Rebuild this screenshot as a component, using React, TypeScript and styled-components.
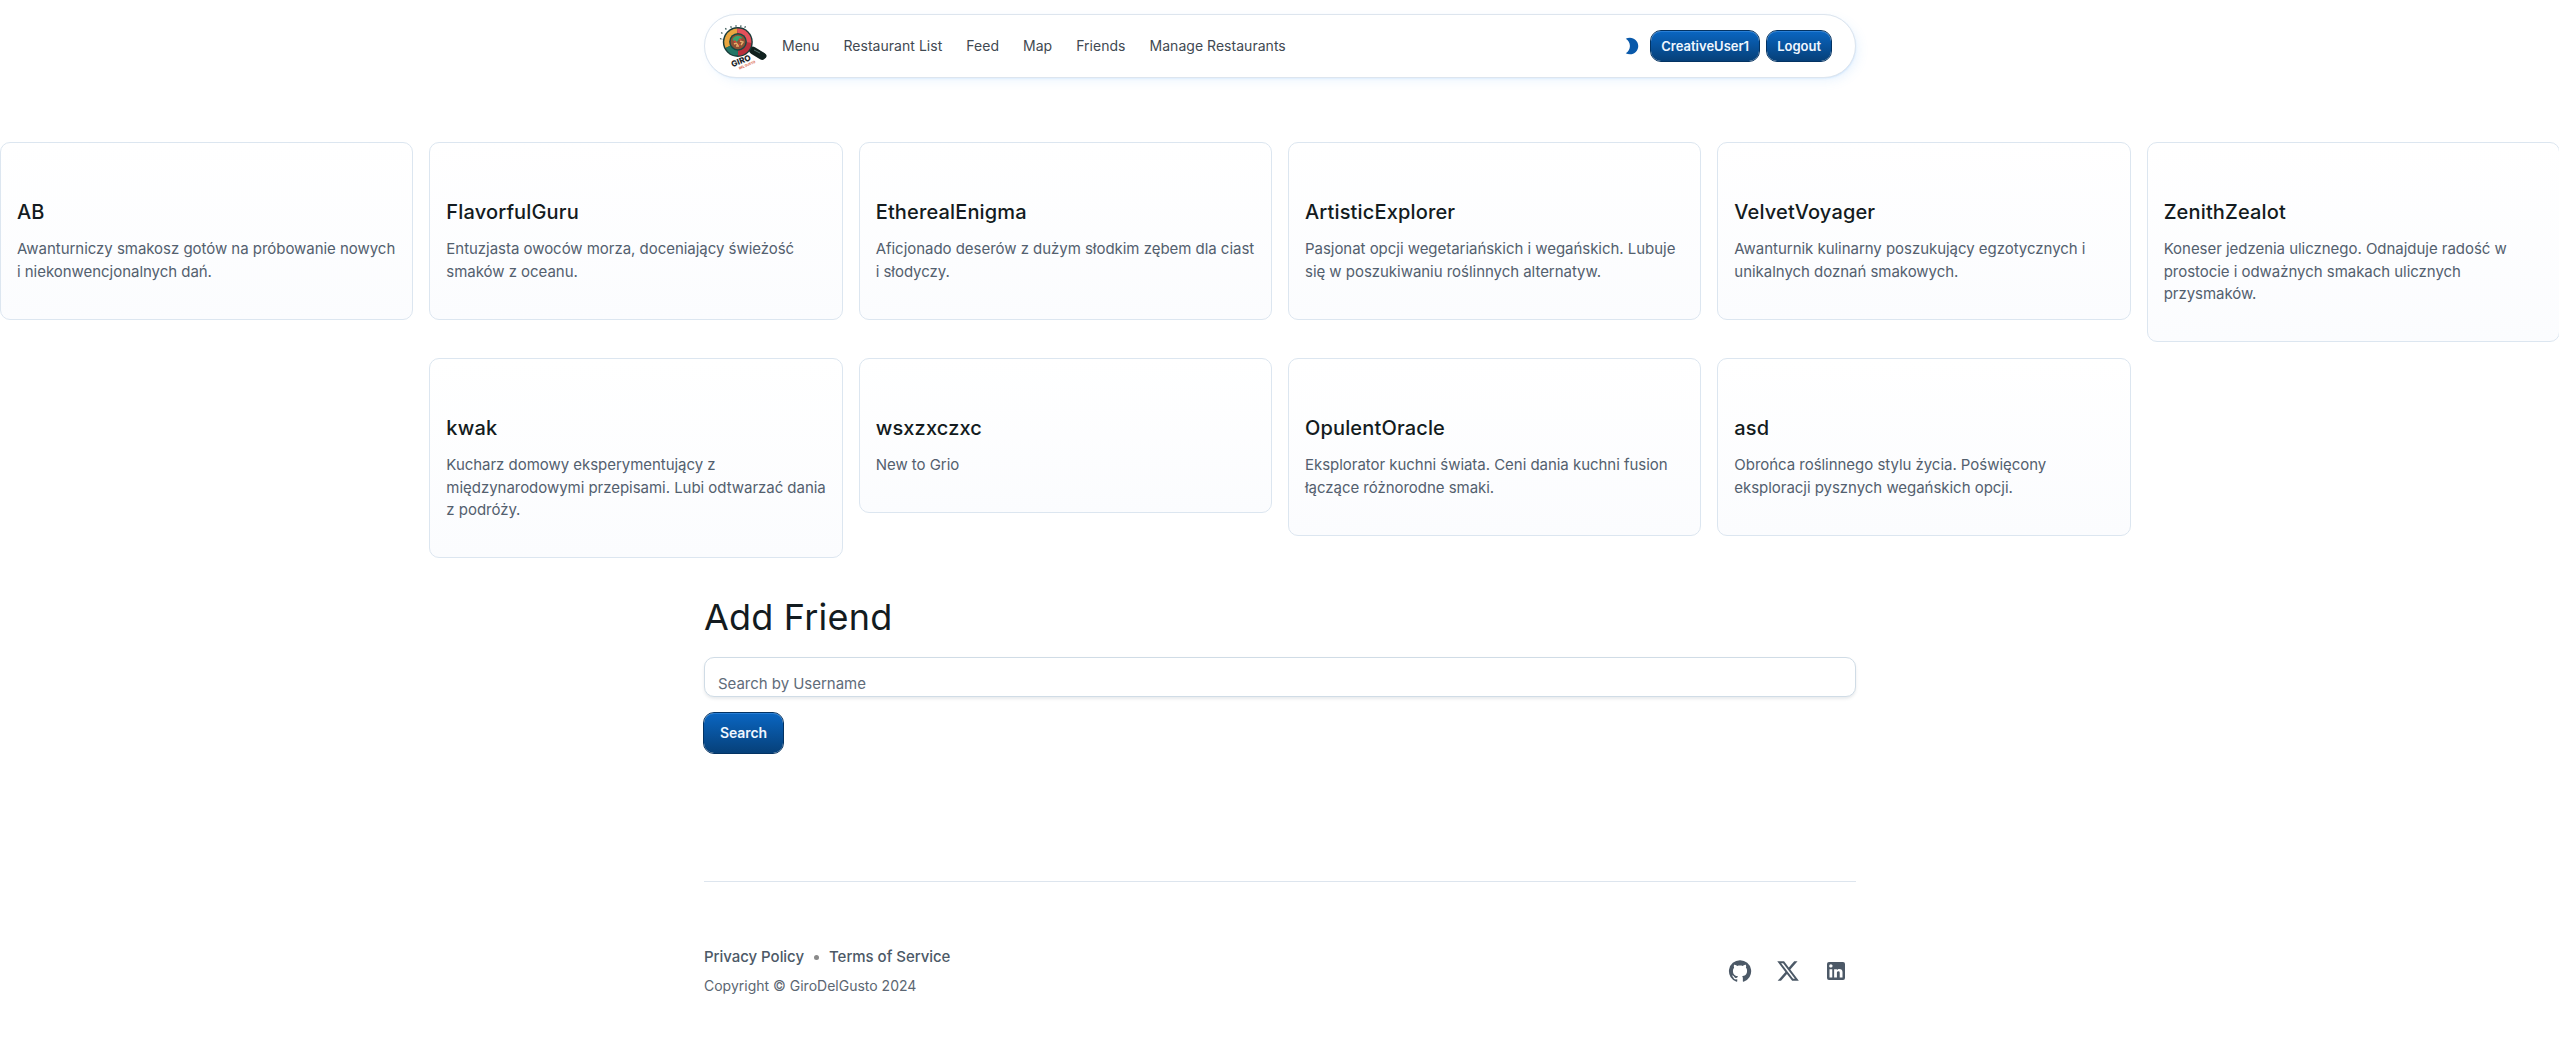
import React from "react";
import styled, { createGlobalStyle } from "styled-components";

const GlobalStyle = createGlobalStyle`
  *, *::before, *::after { box-sizing: border-box; }
  body {
    margin: 0;
    background: #fff;
    color: #131b20;
    font-family: Inter, "Liberation Sans", sans-serif;
    -webkit-font-smoothing: antialiased;
  }
  h1, h2, p { margin: 0; }
`;

const Page = styled.div`
  display: flex;
  flex-direction: column;
  height: 1048px;
  overflow: hidden;
`;

const Container = styled.div`
  width: 1152px;
  margin: 0 auto;
  position: relative;
  left: 0.5px;
`;

const Header = styled.header`
  display: flex;
  align-items: center;
  height: 64px;
  margin-top: 14px;
  padding: 0 24px 0 13px;
  border: 1px solid #dde5ee;
  border-radius: 999px;
  background: #fff;
  box-shadow:
    0 0 1px rgba(85, 166, 246, 0.1),
    1px 1.5px 2px -1px rgba(85, 166, 246, 0.15),
    4px 4px 12px -2.5px rgba(85, 166, 246, 0.15);
`;

const LogoSvg = styled.svg`
  width: 52px;
  height: 52px;
  flex: none;
`;

const Nav = styled.nav`
  display: flex;
  flex: 1;
`;

const NavLink = styled.a`
  padding: 6px 12px;
  font-size: 14px;
  line-height: 20px;
  letter-spacing: 0.03px;
  color: #3f4952;
`;

const Actions = styled.div`
  display: flex;
  align-items: center;
  gap: 8px;
`;

const ModeButton = styled.button`
  display: flex;
  align-items: center;
  justify-content: center;
  width: 32px;
  height: 32px;
  margin-right: -5px;
  padding: 0;
  border: 0;
  background: none;
  color: #0959aa;
`;

const Button = styled.button<{ $small?: boolean }>`
  display: block;
  height: ${(p) => (p.$small ? 30 : 40)}px;
  padding: 0 ${(p) => (p.$small ? 10 : 16)}px;
  border: 0;
  border-radius: 10px;
  outline: 1px solid #033363;
  background: linear-gradient(to bottom, #0a66c2, #064079);
  box-shadow: inset 0 1px rgba(85, 166, 246, 0.4);
  color: #f0f7ff;
  font-family: inherit;
  font-size: ${(p) => (p.$small ? 13 : 14)}px;
  font-weight: 600;
  line-height: 20px;
  letter-spacing: ${(p) => (p.$small ? 0 : -0.1)}px;
`;

const FriendList = styled.section`
  display: flex;
  flex-wrap: wrap;
  justify-content: center;
  align-items: flex-start;
  gap: 16px;
  width: 2560px;
  margin-top: 64px;
`;

const FriendCard = styled.article`
  width: 413.33px;
  padding: 53px 13px 35.5px 16px;
  border: 1px solid #dce6f0;
  border-radius: 10px;
  background: linear-gradient(to bottom, #fff, #fbfcfe);
`;

const FriendName = styled.h2`
  margin-bottom: 10px;
  font-size: 20px;
  font-weight: 500;
  line-height: 32px;
  letter-spacing: 0.15px;
`;

const FriendBio = styled.p`
  font-size: 15px;
  line-height: 22.5px;
  letter-spacing: -0.035px;
  color: #53606e;
`;

const SearchTitle = styled.h1`
  margin-top: 32px;
  font-size: 36px;
  font-weight: 400;
  line-height: 54px;
  letter-spacing: 0.2px;
`;

const SearchField = styled.input`
  display: block;
  width: 100%;
  height: 40px;
  margin: 13px 0 16px;
  padding: 13px 13px 0;
  border: 1px solid #d0dce6;
  border-radius: 10px;
  background: #fff;
  box-shadow: 0 2px 3px rgba(76, 89, 103, 0.12);
  font-family: inherit;
  font-size: 15px;
  letter-spacing: -0.03px;
  &::placeholder { color: #5f6c7a; opacity: 1; }
`;

const Footer = styled.footer`
  display: flex;
  justify-content: space-between;
  align-items: center;
  height: 179px;
  margin-top: 128px;
  border-top: 1px solid #dde5ee;
`;

const Legal = styled.div`
  display: flex;
  flex-direction: column;
  gap: 8px;
`;

const LegalLinks = styled.div`
  display: flex;
  align-items: center;
  font-size: 15px;
  line-height: 22px;
  letter-spacing: -0.04px;
  color: #4c5967;
`;

const LegalLink = styled.a`
  font-weight: 500;
`;

const Dot = styled.span`
  width: 5px;
  height: 5px;
  margin: 0 10px;
  border-radius: 50%;
  background: #8a8a8a;
`;

const Copyright = styled.p`
  font-size: 14px;
  line-height: 20px;
  color: #5b6672;
`;

const Social = styled.div`
  display: flex;
  gap: 24px;
  margin-right: 8px;
  color: #4c5967;
`;

const GlyphSvg = styled.svg<{ $size: number }>`
  display: block;
  width: ${(p) => p.$size}px;
  height: ${(p) => p.$size}px;
  fill: currentColor;
`;

const Glyph = ({ d, size = 24 }: { d: string; size?: number }) => (
  <GlyphSvg $size={size} viewBox="0 0 24 24">
    <path d={d} />
  </GlyphSvg>
);

const MOON =
  "M9.5 2c-1.82 0-3.53.5-5 1.35 2.99 1.73 5 4.95 5 8.65s-2.01 6.92-5 8.65C5.97 21.5 7.68 22 9.5 22c5.52 0 10-4.48 10-10S15.02 2 9.5 2";
const GITHUB =
  "M12 1.27a11 11 0 00-3.48 21.46c.55.09.73-.28.73-.55v-1.84c-3.03.64-3.67-1.46-3.67-1.46-.55-1.29-1.28-1.65-1.28-1.65-.92-.65.1-.65.1-.65 1.1 0 1.73 1.1 1.73 1.1.92 1.65 2.57 1.2 3.21.92a2 2 0 01.64-1.47c-2.47-.27-5.04-1.19-5.04-5.5 0-1.1.46-2.1 1.2-2.84a3.76 3.76 0 010-2.93s.91-.28 3.11 1.1c1.8-.49 3.7-.49 5.5 0 2.1-1.38 3.02-1.1 3.02-1.1a3.76 3.76 0 01.1 2.93c.83.74 1.2 1.74 1.2 2.94 0 4.21-2.57 5.13-5.04 5.4.45.37.82.92.82 2.02v3.03c0 .27.1.64.73.55A11 11 0 0012 1.27";
const X_LOGO =
  "M18.244 2.25h3.308l-7.227 8.26 8.502 11.24H16.17l-5.214-6.817L4.99 21.75H1.68l7.73-8.835L1.254 2.25H8.08l4.713 6.231zm-1.161 17.52h1.833L7.084 4.126H5.117z";
const LINKEDIN =
  "M19 3a2 2 0 0 1 2 2v14a2 2 0 0 1-2 2H5a2 2 0 0 1-2-2V5a2 2 0 0 1 2-2h14m-.5 15.5v-5.3a3.26 3.26 0 0 0-3.26-3.26c-.85 0-1.84.52-2.32 1.3v-1.11h-2.79v8.37h2.79v-4.93c0-.77.62-1.4 1.39-1.4a1.4 1.4 0 0 1 1.4 1.4v4.93h2.79M6.88 8.56a1.68 1.68 0 0 0 1.68-1.68c0-.93-.75-1.69-1.68-1.69a1.69 1.69 0 0 0-1.69 1.69c0 .93.76 1.68 1.69 1.68m1.39 9.94v-8.37H5.5v8.37h2.77z";

const Logo = () => (
  <LogoSvg viewBox="0 0 52 52">
    <g stroke="#3c5a58" strokeWidth="1.3" strokeDasharray="1.6 0.8">
      <path d="M2 18.5l2.5.9M3.2 12.4l1.8 1.5M7.3 8.3l1.6 1.7M12.7 6.2l.8 1.8M18 5.2v2M23 5.4l-.4 1.8M27.5 6.3l-1 1.8" />
    </g>
    <path d="M29 27l17 9" stroke="#10211f" strokeWidth="5" strokeLinecap="round" />
    <path d="M35 30.5l9 5.5" stroke="#10211f" strokeWidth="7.5" strokeLinecap="round" />
    <circle cx="19.8" cy="22" r="15" fill="#183b39" />
    <path d="M19.8 22L7.6 28A13.6 13.6 0 0 1 19 8.5z" fill="#e9a63f" />
    <path d="M19.8 22L19 8.5A13.6 13.6 0 0 1 33.4 23z" fill="#e4505a" />
    <path d="M19.8 22L33.4 23A13.6 13.6 0 0 1 20 35.6z" fill="#b9303c" />
    <path d="M19.8 22L20 35.6A13.6 13.6 0 0 1 7.6 28z" fill="#237767" />
    <circle cx="20" cy="21.8" r="8.9" fill="#174844" />
    <circle cx="20" cy="21.8" r="7.4" fill="#8f5134" />
    <path d="M14.5 19c3-4 7-4 10-1l-3 1-3 3-3-1z" fill="#39a46d" />
    <path d="M16 24l2-1 2 2M22 21l3 1-2 3M18 26l3 0" stroke="#e7b06c" strokeWidth="1.4" fill="none" />
    <path d="M16 21l2 1M21 19l2 1M21 24l1 1" stroke="#dc3d3c" strokeWidth="1.5" />
    <path d="M36 30l6 3" stroke="#567370" strokeWidth="1" />
    <text transform="translate(14.4 47.2) rotate(-21)" fontFamily="Inter, sans-serif" fontSize="8.2" fontWeight="800" fill="#1c2527" textLength="20.5">GIRO</text>
    <text transform="translate(21.4 49.4) rotate(-22)" fontFamily="Inter, sans-serif" fontSize="3.4" fontWeight="700" fill="#d8593f" textLength="17.5">DEL GUSTO</text>
  </LogoSvg>
);

const NAV = ["Menu", "Restaurant List", "Feed", "Map", "Friends", "Manage Restaurants"];

const FRIENDS = [
  { name: "AB", bio: "Awanturniczy smakosz gotów na próbowanie nowych i\u00a0niekonwencjonalnych dań." },
  { name: "FlavorfulGuru", bio: "Entuzjasta owoców morza, doceniający świeżość smaków z oceanu." },
  { name: "EtherealEnigma", bio: "Aficjonado deserów z dużym słodkim zębem dla ciast i\u00a0słodyczy." },
  { name: "ArtisticExplorer", bio: "Pasjonat opcji wegetariańskich i wegańskich. Lubuje się w poszukiwaniu roślinnych alternatyw." },
  { name: "VelvetVoyager", bio: "Awanturnik kulinarny poszukujący egzotycznych i unikalnych doznań smakowych." },
  { name: "ZenithZealot", bio: "Koneser jedzenia ulicznego. Odnajduje radość w prostocie i odważnych smakach ulicznych przysmaków." },
  { name: "kwak", bio: "Kucharz domowy eksperymentujący z międzynarodowymi przepisami. Lubi odtwarzać dania z\u00a0podróży." },
  { name: "wsxzxczxc", bio: "New to Grio" },
  { name: "OpulentOracle", bio: "Eksplorator kuchni świata. Ceni dania kuchni fusion łączące różnorodne smaki." },
  { name: "asd", bio: "Obrońca roślinnego stylu życia. Poświęcony eksploracji pysznych wegańskich opcji." },
];

export default function App() {
  return (
    <Page>
      <GlobalStyle />
      <Container>
        <Header>
          <Logo />
          <Nav>
            {NAV.map((label) => (
              <NavLink key={label}>{label}</NavLink>
            ))}
          </Nav>
          <Actions>
            <ModeButton aria-label="Toggle theme">
              <Glyph d={MOON} size={20} />
            </ModeButton>
            <Button $small>CreativeUser1</Button>
            <Button $small>Logout</Button>
          </Actions>
        </Header>
      </Container>
      <FriendList>
        {FRIENDS.map((f) => (
          <FriendCard key={f.name}>
            <FriendName>{f.name}</FriendName>
            <FriendBio>{f.bio}</FriendBio>
          </FriendCard>
        ))}
      </FriendList>
      <Container>
        <SearchTitle>Add Friend</SearchTitle>
        <SearchField placeholder="Search by Username" />
        <Button>Search</Button>
        <Footer>
          <Legal>
            <LegalLinks>
              <LegalLink>Privacy Policy</LegalLink>
              <Dot />
              <LegalLink>Terms of Service</LegalLink>
            </LegalLinks>
            <Copyright>Copyright © GiroDelGusto 2024</Copyright>
          </Legal>
          <Social>
            <Glyph d={GITHUB} />
            <Glyph d={X_LOGO} />
            <Glyph d={LINKEDIN} />
          </Social>
        </Footer>
      </Container>
    </Page>
  );
}
